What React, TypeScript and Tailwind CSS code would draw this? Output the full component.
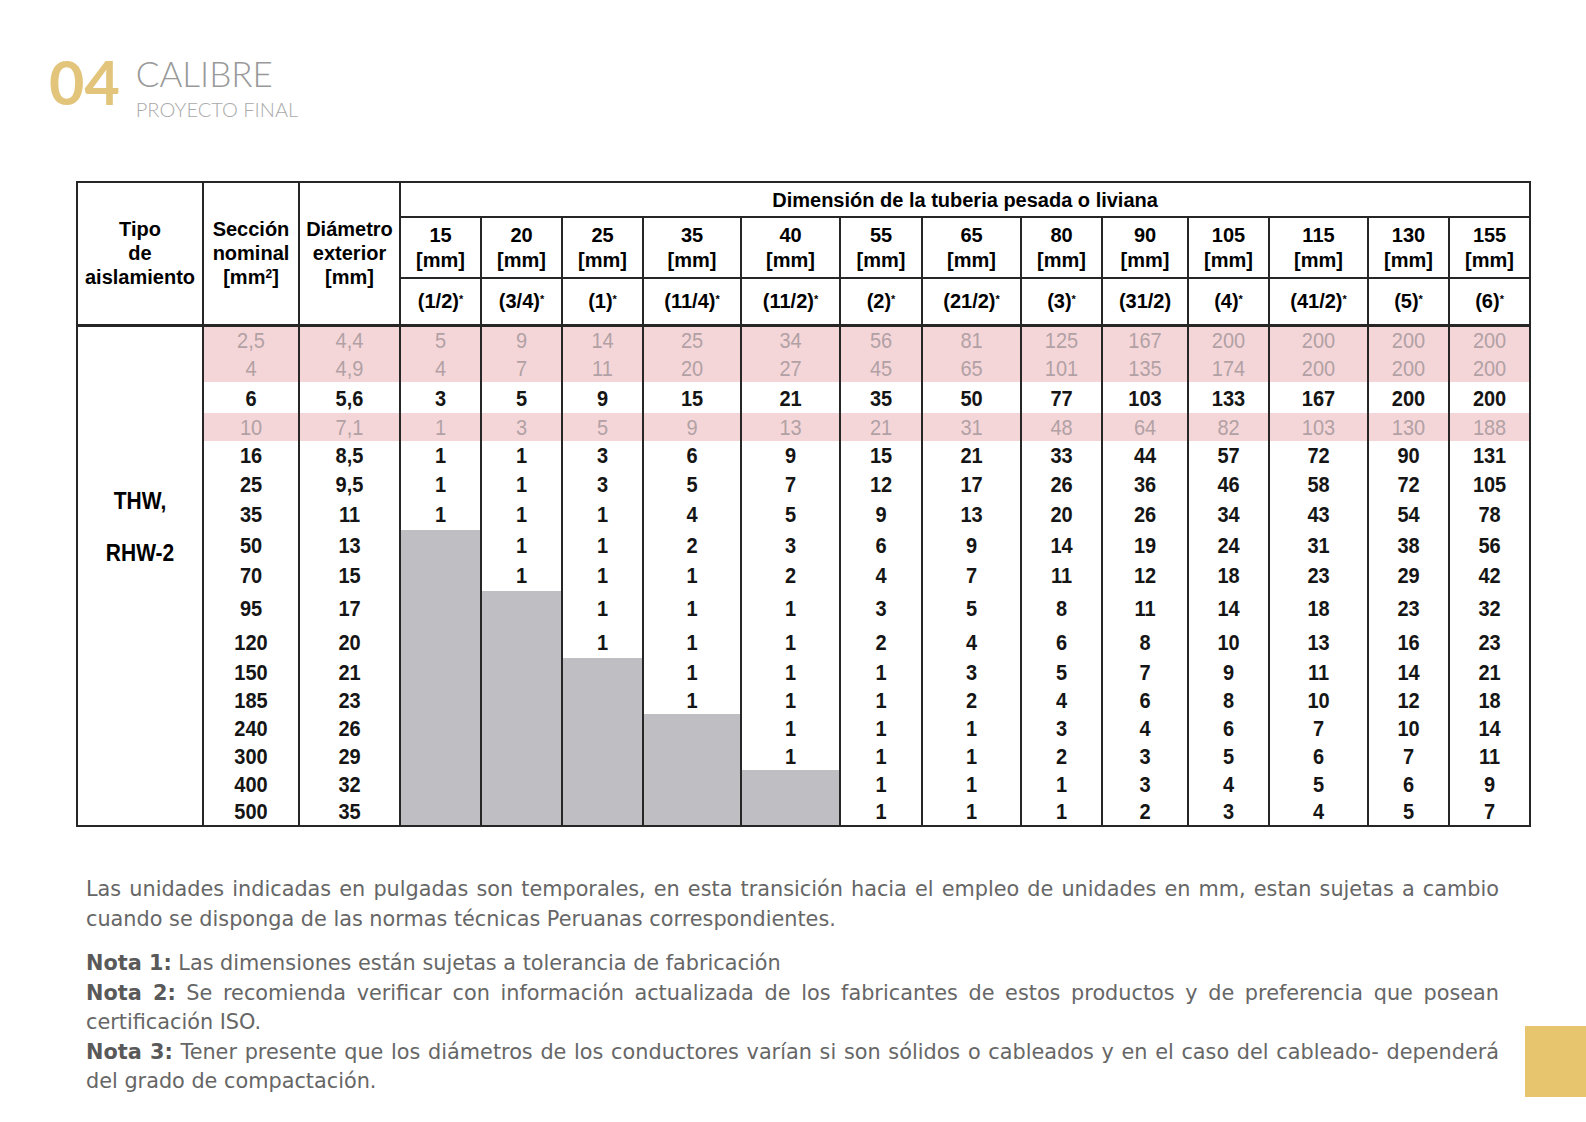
import React from "react";

type Col = { mm: string; inch: string; star: boolean };

const COLS: Col[] = [
  { mm: "15", inch: "(1/2)", star: true },
  { mm: "20", inch: "(3/4)", star: true },
  { mm: "25", inch: "(1)", star: true },
  { mm: "35", inch: "(11/4)", star: true },
  { mm: "40", inch: "(11/2)", star: true },
  { mm: "55", inch: "(2)", star: true },
  { mm: "65", inch: "(21/2)", star: true },
  { mm: "80", inch: "(3)", star: true },
  { mm: "90", inch: "(31/2)", star: false },
  { mm: "105", inch: "(4)", star: true },
  { mm: "115", inch: "(41/2)", star: true },
  { mm: "130", inch: "(5)", star: true },
  { mm: "155", inch: "(6)", star: true },
];

const WIDTHS = [
  "w-[126px]",
  "w-[96px]",
  "w-[101px]",
  "w-[81px]",
  "w-[81px]",
  "w-[81px]",
  "w-[98px]",
  "w-[99px]",
  "w-[82px]",
  "w-[99px]",
  "w-[81px]",
  "w-[86px]",
  "w-[81px]",
  "w-[99px]",
  "w-[81px]",
  "w-[81px]",
];

type Row = { s: string; d: string; v: (string | null)[]; h: string; pink?: boolean };

// null = celda sombreada (no aplica)
const ROWS: Row[] = [
  { s: "2,5", d: "4,4", v: ["5", "9", "14", "25", "34", "56", "81", "125", "167", "200", "200", "200", "200"], h: "h-[29px]", pink: true },
  { s: "4", d: "4,9", v: ["4", "7", "11", "20", "27", "45", "65", "101", "135", "174", "200", "200", "200"], h: "h-[28px]", pink: true },
  { s: "6", d: "5,6", v: ["3", "5", "9", "15", "21", "35", "50", "77", "103", "133", "167", "200", "200"], h: "h-[31px]" },
  { s: "10", d: "7,1", v: ["1", "3", "5", "9", "13", "21", "31", "48", "64", "82", "103", "130", "188"], h: "h-[28px]", pink: true },
  { s: "16", d: "8,5", v: ["1", "1", "3", "6", "9", "15", "21", "33", "44", "57", "72", "90", "131"], h: "h-[28px]" },
  { s: "25", d: "9,5", v: ["1", "1", "3", "5", "7", "12", "17", "26", "36", "46", "58", "72", "105"], h: "h-[29px]" },
  { s: "35", d: "11", v: ["1", "1", "1", "4", "5", "9", "13", "20", "26", "34", "43", "54", "78"], h: "h-[32px]" },
  { s: "50", d: "13", v: [null, "1", "1", "2", "3", "6", "9", "14", "19", "24", "31", "38", "56"], h: "h-[29px]" },
  { s: "70", d: "15", v: [null, "1", "1", "1", "2", "4", "7", "11", "12", "18", "23", "29", "42"], h: "h-[32px]" },
  { s: "95", d: "17", v: [null, null, "1", "1", "1", "3", "5", "8", "11", "14", "18", "23", "32"], h: "h-[34px]" },
  { s: "120", d: "20", v: [null, null, "1", "1", "1", "2", "4", "6", "8", "10", "13", "16", "23"], h: "h-[33px]" },
  { s: "150", d: "21", v: [null, null, null, "1", "1", "1", "3", "5", "7", "9", "11", "14", "21"], h: "h-[28px]" },
  { s: "185", d: "23", v: [null, null, null, "1", "1", "1", "2", "4", "6", "8", "10", "12", "18"], h: "h-[28px]" },
  { s: "240", d: "26", v: [null, null, null, null, "1", "1", "1", "3", "4", "6", "7", "10", "14"], h: "h-[28px]" },
  { s: "300", d: "29", v: [null, null, null, null, "1", "1", "1", "2", "3", "5", "6", "7", "11"], h: "h-[28px]" },
  { s: "400", d: "32", v: [null, null, null, null, null, "1", "1", "1", "3", "4", "5", "6", "9"], h: "h-[27px]" },
  { s: "500", d: "35", v: [null, null, null, null, null, "1", "1", "1", "2", "3", "4", "5", "7"], h: "h-[29px]" },
];

const line = "border-[#262626]";

const Num = ({ value, pink }: { value: string; pink?: boolean }) => (
  <span
    className={`inline-block scale-y-[1.12] ${
      pink ? "font-normal text-[#b2a1a4]" : "font-bold text-[#151515]"
    }`}
  >
    {value}
  </span>
);

const CalibreTable = () => (
  <table className={`table-fixed border-collapse border-2 ${line} w-[1455px] font-['Liberation_Sans',Arial,sans-serif] text-[20px] leading-[20px]`}>
    <colgroup>
      {WIDTHS.map((w, i) => (
        <col key={i} className={w} />
      ))}
    </colgroup>
    <thead>
      <tr className="h-[35px]">
        <th rowSpan={3} className={`border-2 border-b-[3px] ${line} text-center align-middle font-bold leading-[24px] p-0`}>
          Tipo
          <br />
          de
          <br />
          aislamiento
        </th>
        <th rowSpan={3} className={`border-2 border-b-[3px] ${line} text-center align-middle font-bold leading-[24px] p-0`}>
          Sección
          <br />
          nominal
          <br />
          [mm<sup className="text-[12px]">2</sup>]
        </th>
        <th rowSpan={3} className={`border-2 border-b-[3px] ${line} text-center align-middle font-bold leading-[24px] p-0`}>
          Diámetro
          <br />
          exterior
          <br />
          [mm]
        </th>
        <th colSpan={13} className={`border-2 ${line} text-center align-middle font-bold p-0`}>
          Dimensión de la tuberia pesada o liviana
        </th>
      </tr>
      <tr className="h-[61px]">
        {COLS.map((c) => (
          <th key={c.mm} className={`border-2 ${line} text-center align-middle font-bold leading-[25px] p-0`}>
            {c.mm}
            <br />
            [mm]
          </th>
        ))}
      </tr>
      <tr className="h-[47px]">
        {COLS.map((c) => (
          <th key={c.mm} className={`border-2 border-b-[3px] ${line} text-center align-middle font-bold p-0`}>
            {c.inch}
            {c.star && <sup className="text-[11px]">*</sup>}
          </th>
        ))}
      </tr>
    </thead>
    <tbody>
      {ROWS.map((r, ri) => (
        <tr key={r.s} className={r.h}>
          {ri === 0 && (
            <td rowSpan={ROWS.length} className={`border-x-2 ${line} align-top text-center font-bold text-[21px] leading-[52px] pt-[148px]`}>
              <span className="inline-block scale-y-[1.1]">THW,</span>
              <br />
              <span className="inline-block scale-y-[1.1]">RHW-2</span>
            </td>
          )}
          <td className={`border-x-2 ${line} text-center align-middle p-0 ${r.pink ? "bg-[#f4d6d9]" : ""}`}>
            <Num value={r.s} pink={r.pink} />
          </td>
          <td className={`border-x-2 ${line} text-center align-middle p-0 ${r.pink ? "bg-[#f4d6d9]" : ""}`}>
            <Num value={r.d} pink={r.pink} />
          </td>
          {r.v.map((v, ci) => (
            <td
              key={ci}
              className={`border-x-2 ${line} text-center align-middle p-0 ${
                v === null ? "bg-[#bfbec2]" : r.pink ? "bg-[#f4d6d9]" : ""
              }`}
            >
              {v !== null && <Num value={v} pink={r.pink} />}
            </td>
          ))}
        </tr>
      ))}
    </tbody>
  </table>
);

export default function App() {
  return (
    <div className="relative w-[1586px] h-[1122px] overflow-hidden bg-white">
      {/* Encabezado */}
      <div className="flex items-start pl-[49px] pt-[51px] font-['Lato',sans-serif]">
        <span className="text-[61px] font-bold leading-none text-[#e2c47a]">04</span>
        <div className="ml-[16px] mt-[5px] flex flex-col">
          <span className="text-[35px] font-light leading-none text-[#999999]">CALIBRE</span>
          <span className="mt-[8px] text-[20px] font-light leading-none text-[#a9a9a9]">PROYECTO FINAL</span>
        </div>
      </div>

      <div className="ml-[76px] mt-[62px]">
        <CalibreTable />
      </div>

      {/* Notas */}
      <div className="ml-[86px] mt-[48px] w-[1413px] font-['DejaVu_Sans',sans-serif] text-[20.8px] leading-[29.5px] text-[#666666] text-justify">
        <p>
          Las unidades indicadas en pulgadas son temporales, en esta transición hacia el empleo de unidades en mm, estan
          sujetas a cambio cuando se disponga de las normas técnicas Peruanas correspondientes.
        </p>
        <p className="mt-[15px]">
          <b className="font-bold text-[#595959]">Nota 1:</b> Las dimensiones están sujetas a tolerancia de fabricación
        </p>
        <p>
          <b className="font-bold text-[#595959]">Nota 2:</b> Se recomienda verificar con información actualizada de los
          fabricantes de estos productos y de preferencia que posean certificación ISO.
        </p>
        <p>
          <b className="font-bold text-[#595959]">Nota 3:</b> Tener presente que los diámetros de los conductores varían si
          son sólidos o cableados y en el caso del cableado- dependerá del grado de compactación.
        </p>
      </div>

      <div className="absolute right-0 top-[1026px] w-[61px] h-[71px] bg-[#e6c56e]" />
    </div>
  );
}
